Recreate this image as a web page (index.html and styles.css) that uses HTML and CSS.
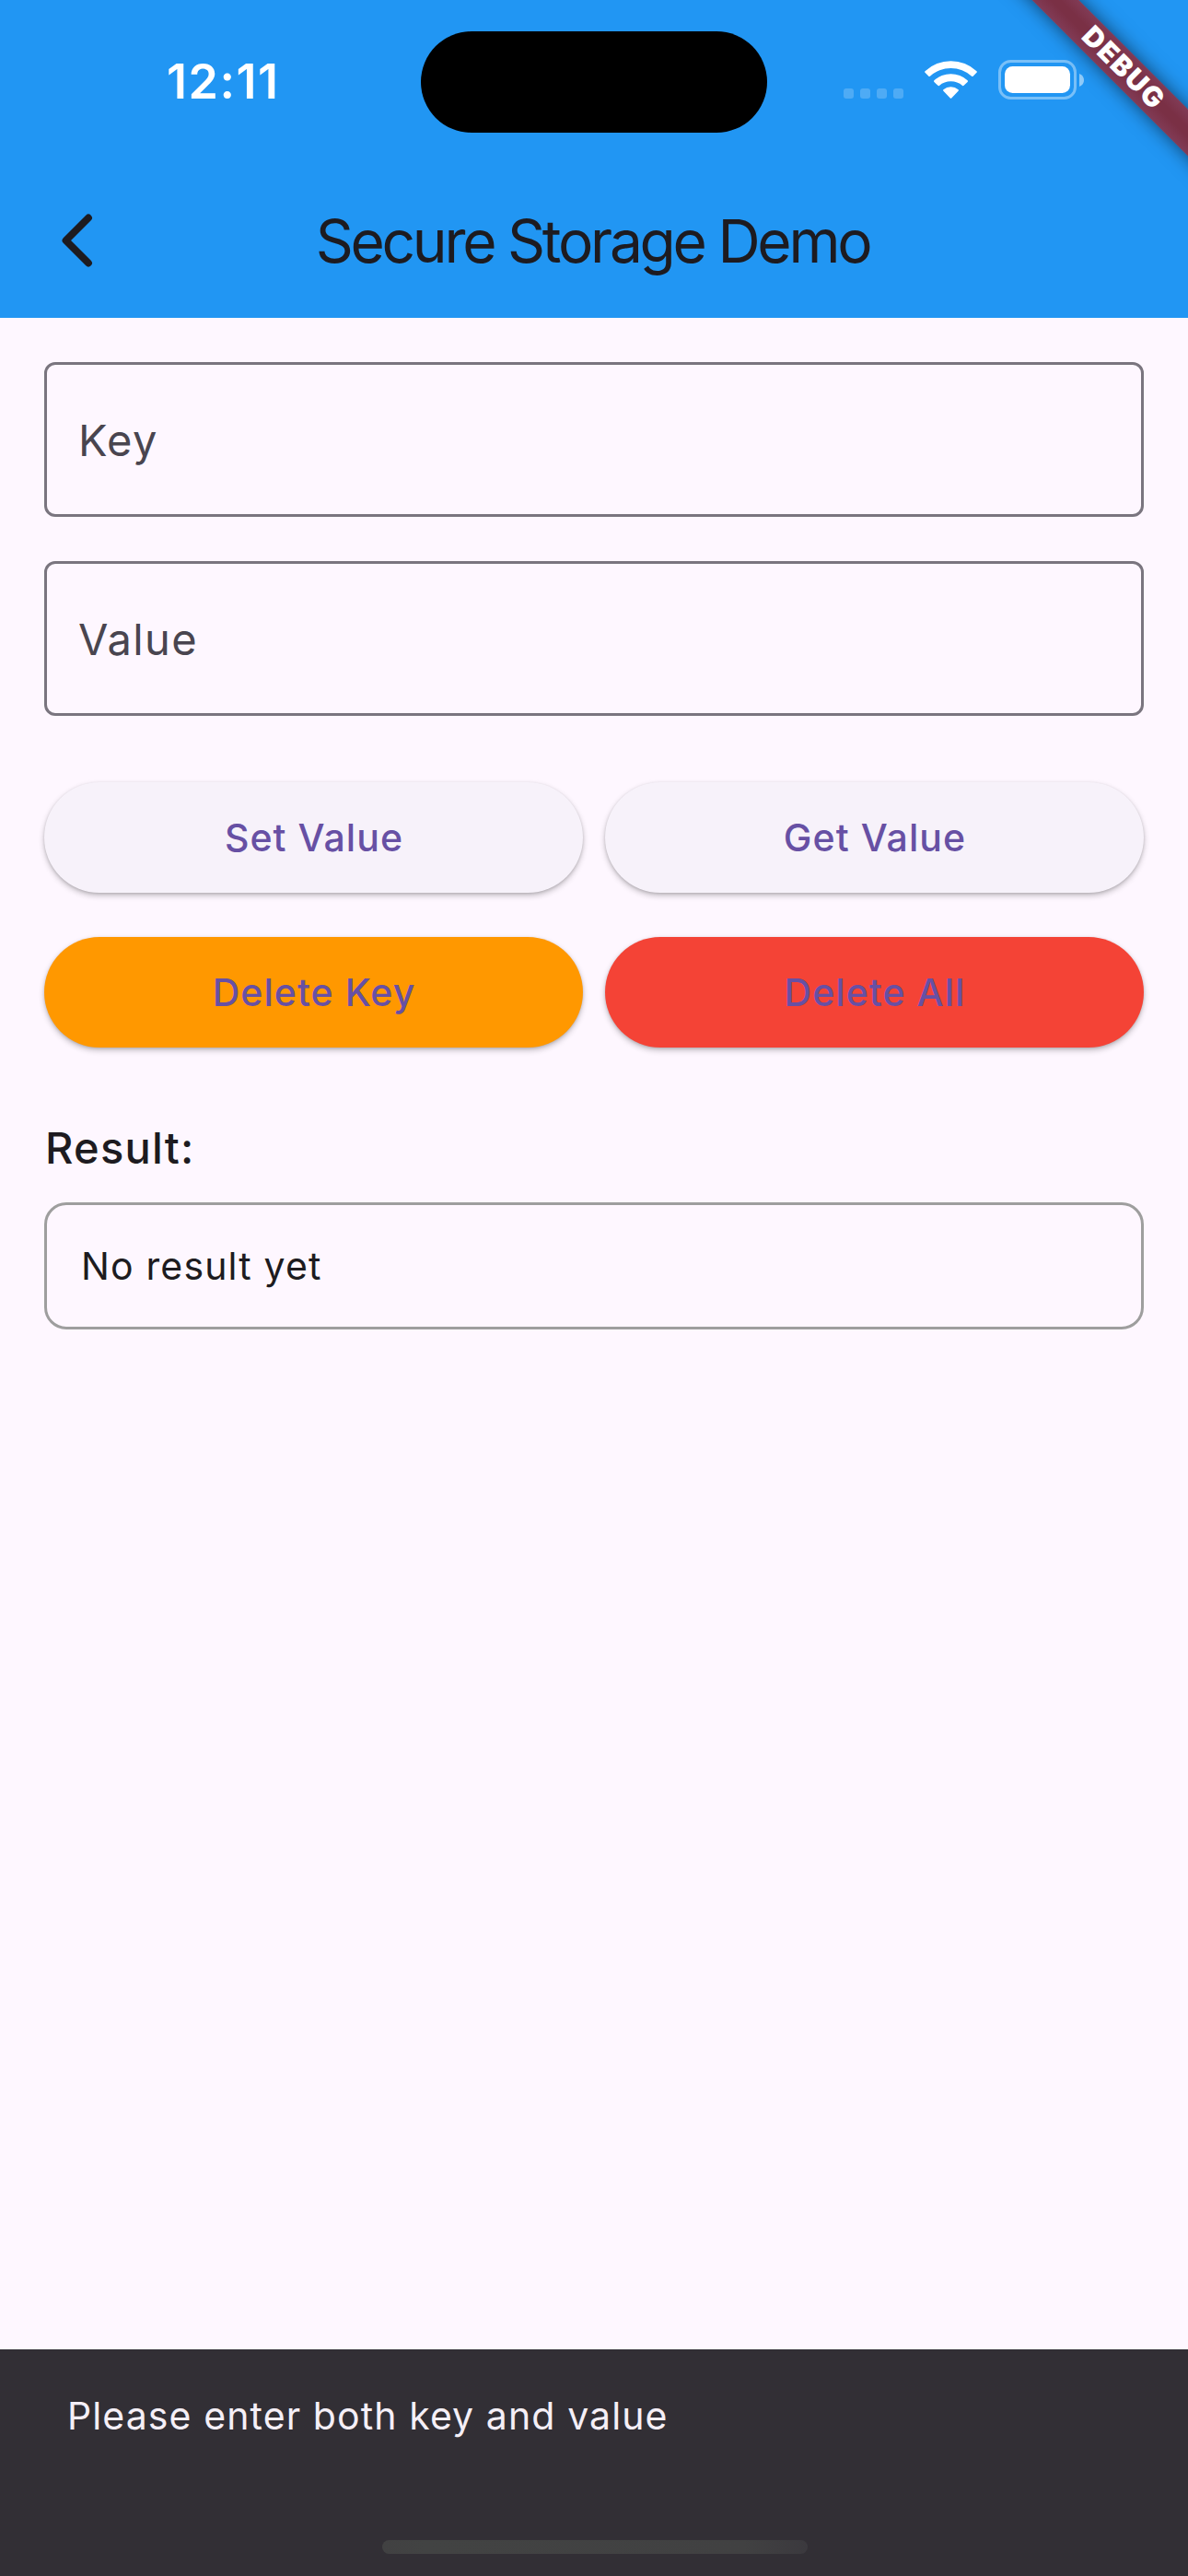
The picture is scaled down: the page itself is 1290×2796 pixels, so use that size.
FILE: index.html
```html
<!DOCTYPE html>
<html lang="en">
<head>
<meta charset="utf-8">
<title>Secure Storage Demo</title>
<link rel="stylesheet" href="styles.css">
</head>
<body>
<div class="screen">
  <header class="header">
    <div class="status-bar">
      <div class="time">12:11</div>
      <div class="island"></div>
      <svg class="status-icons" width="262" height="43" viewBox="0 0 262 43" fill="#fff" aria-hidden="true">
        <g opacity=".2">
          <rect x="0" y="31" width="11" height="11" rx="3"/>
          <rect x="18" y="31" width="11" height="11" rx="3"/>
          <rect x="36" y="31" width="11" height="11" rx="3"/>
          <rect x="54" y="31" width="11" height="11" rx="3"/>
        </g>
        <g transform="translate(88 0)">
          <path d="M.5 12.2A41 41 0 0 1 56.500 12.200Q57.300 13 56.500 13.800L52.600 17.700Q51.900 18.400 51.100 17.700A33.500 33.500 0 0 0 5.900 17.700Q5.100 18.400 4.400 17.700L.5 13.800Q-.3 13 .5 12.200Z"/>
          <path d="M10.400 22.300A26.500 26.500 0 0 1 46.600 22.300Q47.400 23.100 46.600 23.900L42.600 27.800Q41.900 28.500 41.100 27.900A19.500 19.500 0 0 0 15.900 27.900Q15.100 28.500 14.400 27.800L10.400 23.900Q9.600 23.100 10.400 22.300Z"/>
          <path d="M20.400 32.200A13 13 0 0 1 36.600 32.200Q37.400 33 36.600 33.800L29.200 41.500Q28.500 42.200 27.800 41.500L20.400 33.800Q19.600 33 20.400 32.200Z"/>
        </g>
        <rect x="169.500" y="1.500" width="82" height="40" rx="12" fill="none" stroke="#fff" stroke-width="3" opacity=".4"/>
        <rect x="175" y="7" width="71" height="29" rx="8.500"/>
        <path d="M256 15Q261 17 261 22T256 29Z" opacity=".5"/>
      </svg>
    </div>
    <div class="toolbar">
      <svg class="back" width="168" height="168" viewBox="0 0 168 168" fill="none" stroke="#1d1b20" stroke-width="7.800" stroke-linecap="round" stroke-linejoin="round" role="img" aria-label="Back">
        <path d="M96 59.500 71.500 84 96 108.500"/>
      </svg>
      <h1 class="title">Secure Storage Demo</h1>
    </div>
    <div class="debug-corner"><div class="debug-banner"><span>DEBUG</span></div></div>
  </header>
  <main class="content">
    <div class="fields">
      <div class="field">Key</div>
      <div class="field">Value</div>
    </div>
    <div class="actions">
      <button class="button">Set Value</button>
      <button class="button">Get Value</button>
      <button class="button button-orange">Delete Key</button>
      <button class="button button-red">Delete All</button>
    </div>
    <h2 class="result-label">Result:</h2>
    <div class="result">No result yet</div>
  </main>
  <footer class="snackbar">
    <p class="message">Please enter both key and value</p>
    <div class="home-indicator"></div>
  </footer>
</div>
</body>
</html>
```
FILE: styles.css
```css
* { box-sizing: border-box; }

body {
  margin: 0;
  background: #fef7ff;
  color: #1d1b20;
  font-family: Inter, "Liberation Sans", sans-serif;
}

.screen {
  display: flex;
  flex-direction: column;
  width: 1290px;
  height: 2796px;
  overflow: hidden;
}

.header {
  position: relative;
  height: 345px;
  background: #2196f3;
}

.status-bar {
  display: grid;
  grid-template-columns: 457px 376px 1fr;
  align-items: center;
  height: 177px;
}

.time {
  padding-left: 181px;
  color: #fff;
  font-size: 52px;
  font-weight: 600;
  line-height: 62px;
  letter-spacing: 1.5px;
}

.island {
  height: 110px;
  margin-top: 1px;
  border-radius: 55px;
  background: #000;
}

.status-icons {
  justify-self: end;
  margin: 0 112px 4px 0;
}

.toolbar {
  display: grid;
  grid-template-columns: 168px 1fr 168px;
  align-items: center;
  height: 168px;
}

.title {
  margin: 0;
  padding: 1px 3px 0 0;
  font-size: 64px;
  font-weight: 400;
  line-height: 84px;
  letter-spacing: -3.25px;
  text-align: center;
  white-space: nowrap;
}

/* Diagonal ribbon laid over the top right corner */
.debug-corner {
  position: absolute;
  top: 0;
  right: 0;
  width: 240px;
  height: 240px;
  overflow: hidden;
}

.debug-banner {
  position: absolute;
  top: 54.8px;
  left: -30.8px;
  width: 400px;
  height: 36px;
  padding-left: 3px;
  background: linear-gradient(#813b56, #7a3045 40%, #7a3045 60%, #813b56);
  box-shadow: 0 0 20px rgba(0, 0, 0, .55);
  color: #fff;
  font-size: 30px;
  font-weight: 900;
  line-height: 34px;
  letter-spacing: 1.8px;
  text-align: center;
  transform: rotate(45deg);
}

.content {
  flex: 1;
  padding: 48px;
}

.fields {
  display: grid;
  gap: 48px;
}

.field {
  height: 168px;
  padding: 1px 34px 0;
  border: 3px solid #7a757f;
  border-radius: 12px;
  color: #49454f;
  font-size: 47px;
  line-height: 162px;
  letter-spacing: 1.4px;
}

.actions {
  display: grid;
  grid-template-columns: 1fr 1fr;
  gap: 48px 24px;
  margin: 72px 0;
}

.button {
  height: 120px;
  padding: 0 0 0 1px;
  border: 0;
  border-radius: 60px;
  background: #f7f2fa;
  box-shadow: 0 3px 6px rgba(0, 0, 0, .24), 0 1px 3px rgba(0, 0, 0, .12);
  color: #6750a4;
  font: 500 41px/60px Inter, "Liberation Sans", sans-serif;
  letter-spacing: 1.05px;
}

.button-orange { background: #ff9800; }
.button-red { background: #f44336; }

.result-label {
  margin: 0 0 24px;
  padding: 1px 0 0 1px;
  height: 72px;
  font-size: 47px;
  font-weight: 500;
  line-height: 72px;
  letter-spacing: 1.25px;
}

.result {
  height: 138px;
  padding: 0 37px;
  border: 3px solid #9e9e9e;
  border-radius: 24px;
  font-size: 41px;
  line-height: 132px;
  letter-spacing: 1.15px;
}

.snackbar {
  display: flex;
  flex-direction: column;
  justify-content: space-between;
  height: 246px;
  padding: 42px 72px 24px 73px;
  background: #322f35;
}

.message {
  margin: 0;
  color: #f5eff7;
  font-size: 41px;
  line-height: 60px;
  letter-spacing: 1.1px;
}

.home-indicator {
  align-self: center;
  width: 462px;
  height: 15px;
  border-radius: 8px;
  background: linear-gradient(90deg, #414142 0%, #424343 10%, #414142 85%, #3b393e 100%);
}
```
